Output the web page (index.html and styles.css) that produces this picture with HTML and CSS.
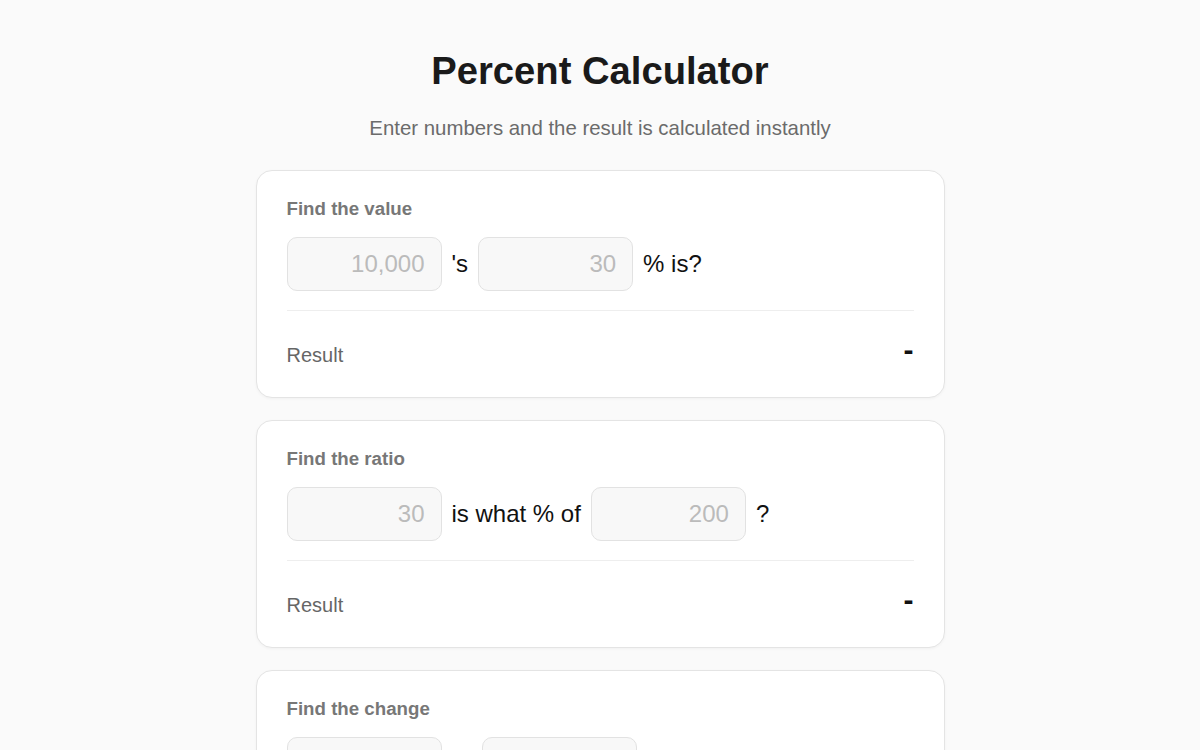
FILE: index.html
```html
<!DOCTYPE html>
<html>

<head>
    <title>Percent Calculator</title>
    <link rel="stylesheet" href="styles.css">
</head>

<body>
    <div id="container">
        <h1 class="title">Percent Calculator</h1>
        <p class="subtitle">Enter numbers and the result is calculated instantly</p>

        <div class="card">
            <div class="label">Find the value</div>
            <div class="row">
                <input class="num" type="text" placeholder="10,000" />
                <span class="word">'s</span>
                <input class="num" type="text" placeholder="30" />
                <span class="word">% is?</span>
            </div>
            <div class="result">
                <span class="resultLabel">Result</span>
                <span class="resultValue">-</span>
            </div>
        </div>

        <div class="card">
            <div class="label">Find the ratio</div>
            <div class="row">
                <input class="num" type="text" placeholder="30" />
                <span class="word">is what % of</span>
                <input class="num" type="text" placeholder="200" />
                <span class="word">?</span>
            </div>
            <div class="result">
                <span class="resultLabel">Result</span>
                <span class="resultValue">-</span>
            </div>
        </div>

        <div class="card">
            <div class="label">Find the change</div>
            <div class="row">
                <input class="num" type="text" placeholder="100" />
                <span class="word">to</span>
                <input class="num" type="text" placeholder="120" />
                <span class="word">change?</span>
            </div>
            <div class="result">
                <span class="resultLabel">Result</span>
                <span class="resultValue">-</span>
            </div>
        </div>
    </div>
</body>

</html>
```

FILE: styles.css
```css
* {
    box-sizing: border-box;
    font-family: "Liberation Sans", Arial, sans-serif;
}

body {
    margin: 0;
    background: #fafafa;
    color: #111;
}

#container {
    width: 689px;
    margin: 0 auto;
    padding-top: 48px;
}

.title {
    margin: 0;
    text-align: center;
    font-size: 38.2px;
    line-height: 46px;
    font-weight: bold;
    color: #1a1a1a;
}

.subtitle {
    margin: 22px 0 30px;
    text-align: center;
    font-size: 20.4px;
    line-height: 24px;
    color: #6b6b6b;
}

.card {
    background: #fff;
    border: 1px solid #e4e4e4;
    border-radius: 16px;
    box-shadow: 0 1px 3px rgba(0, 0, 0, 0.04);
    padding: 27px 30px 25px;
    margin-bottom: 22px;
}

.label {
    font-size: 18.7px;
    line-height: 22px;
    font-weight: bold;
    color: #777;
    margin-bottom: 17px;
}

.row {
    display: flex;
    align-items: center;
    gap: 10px;
    padding-bottom: 19px;
    border-bottom: 1px solid #eee;
}

.num {
    width: 155px;
    height: 54px;
    padding: 0 16px;
    border: 1px solid #e2e2e2;
    border-radius: 10px;
    background: #f8f8f8;
    font-size: 24px;
    text-align: right;
    color: #111;
    outline: none;
}

.num::placeholder {
    color: #bbb;
}

.word {
    font-size: 24px;
}

.result {
    display: flex;
    justify-content: space-between;
    align-items: center;
    padding-top: 27px;
    height: 61px;
}

.resultLabel {
    font-size: 20px;
    color: #666;
}

.resultValue {
    font-size: 30px;
    line-height: 34px;
    font-weight: bold;
    color: #111;
    padding-bottom: 10px;
}
```
